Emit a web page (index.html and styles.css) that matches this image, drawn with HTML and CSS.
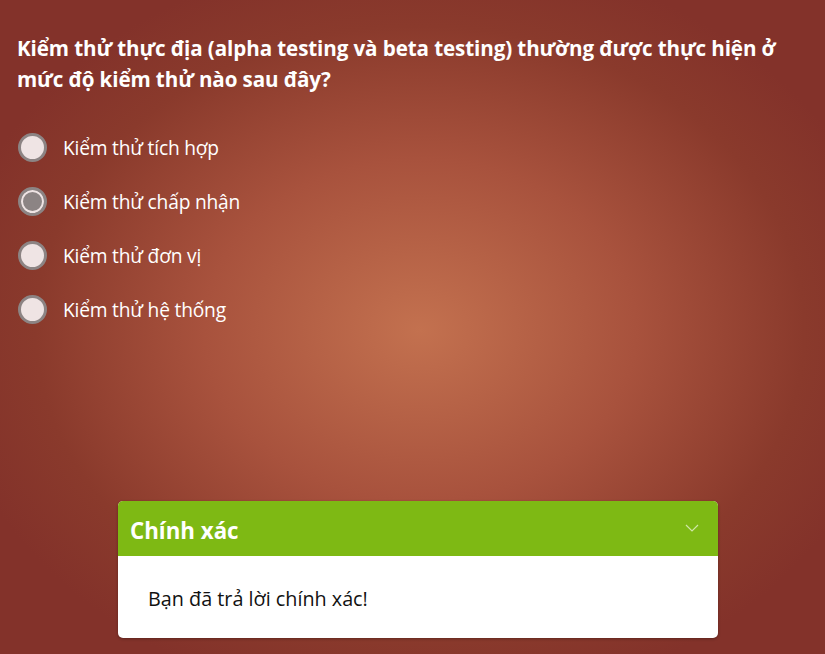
FILE: index.html
```html
<!DOCTYPE html>
<html lang="vi">
<head>
<meta charset="utf-8">
<link rel="stylesheet" href="styles.css">
</head>
<body>
<div class="page">
  <h1 class="question">Kiểm thử thực địa (alpha testing và beta testing) thường được thực hiện ở mức độ kiểm thử nào sau đây?</h1>
  <div class="options">
    <div class="option"><span class="radio"></span><span class="label">Kiểm thử tích hợp</span></div>
    <div class="option"><span class="radio checked"></span><span class="label">Kiểm thử chấp nhận</span></div>
    <div class="option"><span class="radio"></span><span class="label">Kiểm thử đơn vị</span></div>
    <div class="option"><span class="radio"></span><span class="label">Kiểm thử hệ thống</span></div>
  </div>
  <div class="feedback">
    <div class="fb-head">
      <span class="fb-title">Chính xác</span>
      <svg class="chev" width="14" height="8" viewBox="0 0 14 8"><path d="M1 1 L7 7 L13 1" fill="none" stroke="#cfe6a6" stroke-width="1.2"/></svg>
    </div>
    <div class="fb-body">Bạn đã trả lời chính xác!</div>
  </div>
</div>
</body>
</html>
```
FILE: styles.css
```css
html, body {
  margin: 0;
  padding: 0;
  height: 100%;
}
body {
  background: radial-gradient(ellipse 480px 380px at 420px 330px, #c3714f 0%, #a8523d 45%, #8a3a2c 80%, #83322a 100%);
  background-color: #83322a;
  font-family: "Open Sans", "Noto Sans", sans-serif;
  color: #fff;
  overflow: hidden;
}
.page {
  height: 654px;
  display: flex;
  flex-direction: column;
  padding: 33px 0 0 17px;
  box-sizing: border-box;
}
.question {
  margin: 0;
  font-size: 20.6px;
  font-weight: 700;
  line-height: 31px;
  width: 790px;
  letter-spacing: -0.1px;
}
.options {
  margin-top: 38px;
  display: flex;
  flex-direction: column;
  gap: 26px;
}
.option {
  display: flex;
  align-items: center;
  height: 28px;
}
.radio {
  width: 23px;
  height: 23px;
  border-radius: 50%;
  border: 3px solid #8c8484;
  background: #efe4e4;
  margin-left: 1px;
  flex: none;
  position: relative;
}
.radio.checked {
  background: #8c8484;
  box-shadow: inset 0 0 0 2px #efe4e4;
}
.label {
  margin-left: 16px;
  font-size: 19.2px;
  letter-spacing: -0.2px;
}
.feedback {
  margin: auto 0 16px 101px;
  width: 600px;
  border-radius: 5px;
  overflow: hidden;
  background: #fff;
  box-shadow: 0 1px 3px rgba(0,0,0,0.3);
}
.fb-head {
  height: 55px;
  background: #7eb914;
  display: flex;
  align-items: center;
  justify-content: space-between;
  padding: 3px 19px 0 12px;
  box-sizing: border-box;
}
.chev {
  margin-top: -4px;
}
.fb-title {
  font-size: 22.3px;
  font-weight: 700;
  color: #fff;
}
.fb-body {
  height: 82px;
  display: flex;
  align-items: center;
  padding: 3px 0 0 30px;
  box-sizing: border-box;
  color: #111;
  font-size: 19.8px;
}
```
